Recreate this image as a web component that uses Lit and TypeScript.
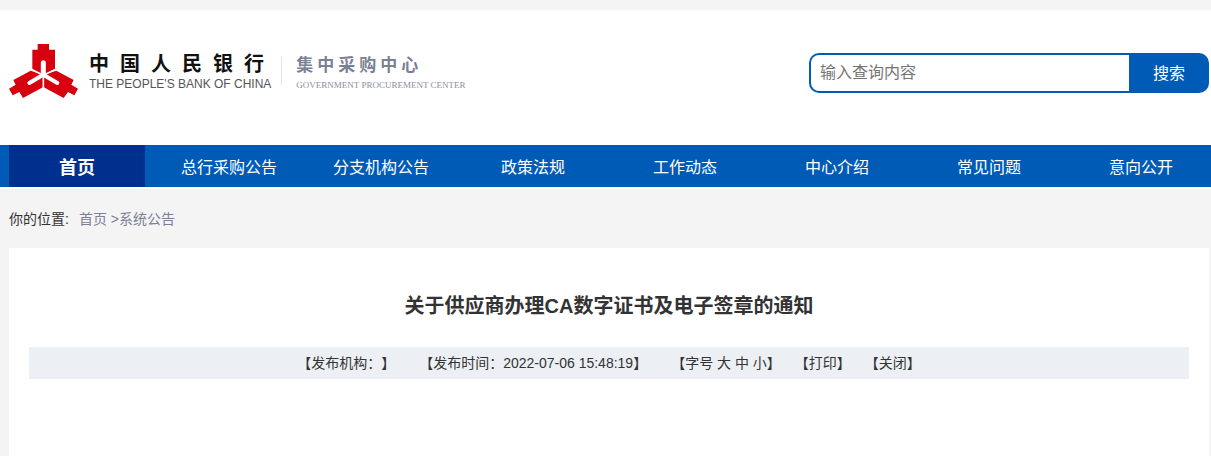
import { LitElement, html, css } from "lit";
import { customElement } from "lit/decorators.js";

const NAV = ["首页", "总行采购公告", "分支机构公告", "政策法规", "工作动态", "中心介绍", "常见问题", "意向公开"];

@customElement("site-logo")
class SiteLogo extends LitElement {
  static styles = css`
    :host { display: block; }
    .logo { display: flex; align-items: center; color: inherit; text-decoration: none; }
    .mark { width: 70px; height: 56px; flex: none; }
    .name { display: flex; flex-direction: column; gap: 2px; }
    .chars { display: flex; line-height: 22px; }
    .latin { line-height: 14px; white-space: nowrap; }
    .bank { margin-left: 10px; }
    .bank .chars { gap: 11px; font-size: 20px; font-weight: 700; color: #111; margin-top: 2px; }
    .bank .latin { font-size: 12px; line-height: 14px; color: #555; }
    .rule { width: 1px; height: 28px; background: #e4e4e8; margin: 0 14px 0 10px; }
    .center .chars { gap: 4px; font-size: 17px; font-weight: 700; color: #7b8095; margin-top: 4px; }
    .center .latin { font-family: "Liberation Serif", serif; font-size: 9px; line-height: 12px; color: #8b8fa2; }
  `;
  render() {
    return html`
      <a class="logo" href="#">
        <svg class="mark" viewBox="27 39 210 168" aria-hidden="true">
          <g fill="#d7000f">
            <path d="M113 42h34v17h18v60l-35 18-33-18V59h16z"/>
            <path d="M92 122l38 12v37l-61 33-11-18-20 10-11-20 20-12-7-14z"/>
            <path d="M169 122l-39 12v37l61 33 13-18 19 10 11-20-20-12 7-14z"/>
          </g>
          <g fill="none" stroke="#fff">
            <path stroke-width="5" d="M130 136L92 117M130 136l39-19M130 134v44"/>
            <path stroke-width="15" stroke-linecap="round" d="M130 98v32"/>
            <path stroke-width="12" stroke-linecap="round" d="M130 134l-42 25M130 134l42 25"/>
          </g>
        </svg>
        <span class="name bank">
          <span class="chars">${[..."中国人民银行"].map((c) => html`<span>${c}</span>`)}</span>
          <span class="latin">THE PEOPLE'S BANK OF CHINA</span>
        </span>
        <span class="rule"></span>
        <span class="name center">
          <span class="chars">${[..."集中采购中心"].map((c) => html`<span>${c}</span>`)}</span>
          <span class="latin">GOVERNMENT PROCUREMENT CENTER</span>
        </span>
      </a>
    `;
  }
}

@customElement("app-root")
class AppRoot extends LitElement {
  static styles = css`
    :host {
      display: flex;
      flex-direction: column;
      min-height: 100vh;
      background: #f4f4f4;
      padding-top: 10px;
      box-sizing: border-box;
      color: #333;
      font: 14px/20px "Liberation Sans", "Noto Sans CJK SC", sans-serif;
      text-spacing-trim: space-all;
    }
    * { box-sizing: border-box; }
    a { color: inherit; text-decoration: none; }
    .wrap { padding: 0 2px 0 9px; }
    header { background: #fff; }
    .top { display: flex; justify-content: space-between; align-items: flex-start; padding-top: 33px; padding-bottom: 42px; }
    .search { display: flex; width: 400px; height: 40px; margin-top: 10px; margin-bottom: 10px; }
    .search input {
      flex: 1; min-width: 0; border: 2px solid #005bb7; border-right: 0; border-radius: 10px 0 0 10px;
      padding: 0 9px; font: inherit; font-size: 16px; outline: none; background: #fff;
    }
    .search input::placeholder { color: #757575; opacity: 1; }
    .search button {
      width: 80px; border: 0; border-radius: 0 10px 10px 0; background: #005bb7; color: #fff;
      font: inherit; font-size: 16px; padding: 2px 0 0; cursor: pointer;
    }
    nav { background: #005bb7; border-bottom: 2px solid #fff; }
    .menu { display: grid; grid-template-columns: repeat(8, 1fr); gap: 16px; }
    .menu a { height: 42px; line-height: 46px; font-size: 16px; color: #fff; text-align: center; white-space: nowrap; }
    .menu a.on { background: #00308d; font-size: 18px; font-weight: 700; }
    .crumbs { display: flex; gap: 10px; padding-top: 20px; padding-bottom: 19px; }
    .path { color: #7b8095; }
    main { flex: 1; display: flex; flex-direction: column; }
    article { flex: 1; background: #fff; padding: 43px 20px 0; }
    h1 { margin: 0 0 26px; font-size: 20px; line-height: 30px; font-weight: 700; text-align: center; }
    .meta { display: flex; justify-content: center; gap: 14px; background: #ecf0f4; line-height: 32px; white-space: nowrap; }
    .wide { margin-right: 10px; }
  `;
  render() {
    return html`
      <header>
        <div class="wrap top">
          <site-logo></site-logo>
          <form class="search" @submit=${(e: Event) => e.preventDefault()}>
            <input type="text" aria-label="输入查询内容" placeholder="输入查询内容" />
            <button type="submit">搜索</button>
          </form>
        </div>
      </header>
      <nav>
        <div class="wrap menu">
          ${NAV.map((t, i) => html`<a href="#" class=${i === 0 ? "on" : ""}>${t}</a>`)}
        </div>
      </nav>
      <div class="wrap crumbs">
        <span>你的位置:</span>
        <span class="path"><a href="#">首页</a> &gt;<a href="#">系统公告</a></span>
      </div>
      <main class="wrap">
        <article>
          <h1>关于供应商办理CA数字证书及电子签章的通知</h1>
          <div class="meta">
            <span class="wide">【发布机构：】</span>
            <span class="wide">【发布时间：2022-07-06 15:48:19】</span>
            <span>【字号 <a href="#">大</a> <a href="#">中</a> <a href="#">小</a>】</span>
            <span>【<a href="#">打印</a>】</span>
            <span>【<a href="#">关闭</a>】</span>
          </div>
        </article>
      </main>
    `;
  }
}
